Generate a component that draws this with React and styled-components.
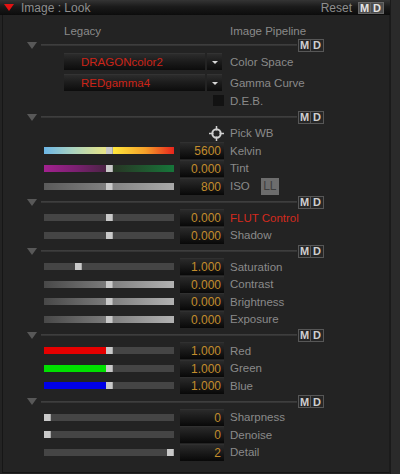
import React from 'react';
import styled, { createGlobalStyle } from 'styled-components';

const GlobalStyle = createGlobalStyle`
  html, body {
    margin: 0;
    padding: 0;
    background: #232323;
  }
  body {
    font-family: "Liberation Sans", Arial, sans-serif;
    font-size: 11.5px;
  }
`;

const Frame = styled.div`
  width: 400px;
  height: 474px;
  display: flex;
  background: #232323;
  overflow: hidden;
`;

const Main = styled.div`
  width: 390px;
  display: flex;
  flex-direction: column;
`;

const ScrollTrack = styled.div`
  width: 9px;
  background: #2a2a2a;
  border-left: 1px solid #1a1a1a;
`;

const TitleBar = styled.div`
  height: 15px;
  display: flex;
  align-items: center;
  padding: 0 6px 0 4px;
  box-sizing: border-box;
  background: linear-gradient(#343434, #1a1a1a 45%, #0c0c0c);
  color: #8e8e8e;
  font-size: 12px;
`;

const Caret = styled.span`
  width: 0;
  height: 0;
  border-left: 5px solid transparent;
  border-right: 5px solid transparent;
  border-top: 7px solid ${p => p.$color || '#e21212'};
`;

const TitleText = styled.span`
  margin-left: 7px;
  flex: 1;
`;

const ResetText = styled.span`
  margin-right: 6px;
`;

const MDGroup = styled.div`
  display: flex;
`;

const MDButton = styled.div`
  width: 13px;
  height: ${p => (p.$title ? '12px' : '13px')};
  box-sizing: border-box;
  display: flex;
  align-items: center;
  justify-content: center;
  font-weight: bold;
  font-size: 11px;
  border: 1px solid ${p => (p.$title ? '#666' : '#575757')};
  background: ${p => (p.$title ? '#4c4c4c' : '#262626')};
  color: ${p => (p.$title ? '#e4e4e4' : '#cfcfcf')};
  & + & {
    border-left: none;
  }
`;

const Body = styled.div`
  height: 458px;
  box-sizing: border-box;
  margin-left: 2px;
  border-left: 1px solid #161616;
  border-right: 1px solid #1b1b1b;
  border-bottom: 1px solid #141414;
  display: flex;
  flex-direction: column;
  color: #8a8a8a;
`;

const Header = styled.div`
  height: 23px;
  box-sizing: border-box;
  padding: 9px 0 0 61px;
  display: grid;
  grid-template-columns: 166px auto;
  line-height: 14px;
`;

const Separator = styled.div`
  height: 14px;
  display: flex;
  align-items: center;
  padding-left: 24px;
`;

const SepLine = styled.div`
  width: 256px;
  height: 2px;
  margin-left: 4px;
  margin-right: 1px;
  background: linear-gradient(#424242, #313131);
`;

const Legacy = styled.div`
  display: flex;
  flex-direction: column;
  padding-top: 1px;
  gap: 4px;
`;

const DropRow = styled.div`
  height: 17px;
  display: flex;
  align-items: center;
  padding-left: 61px;
`;

const DropMain = styled.div`
  width: 141px;
  height: 17px;
  box-sizing: border-box;
  display: flex;
  align-items: center;
  padding-left: 17px;
  color: #cc2418;
  background: linear-gradient(#2c2c2c, #1b1b1b 50%, #0c0c0c);
  border-top: 1px solid #333;
`;

const DropArrow = styled.div`
  width: 15px;
  height: 17px;
  box-sizing: border-box;
  margin-left: 2px;
  margin-right: 8px;
  display: flex;
  align-items: center;
  justify-content: center;
  background: linear-gradient(#2c2c2c, #1b1b1b 50%, #0c0c0c);
  border-top: 1px solid #333;
  &::after {
    content: "";
    border-left: 3px solid transparent;
    border-right: 3px solid transparent;
    border-top: 3px solid #d8d8d8;
  }
`;

const Row = styled.div`
  height: ${p => p.$h || 17.5}px;
  display: grid;
  grid-template-columns: 130px 44px auto;
  column-gap: 6px;
  align-items: center;
  padding-left: 41px;
`;

const Track = styled.div`
  position: relative;
  height: 7px;
  background: ${p => p.$bg || '#454545'};
`;

const Fill = styled.div`
  height: 100%;
  background: ${p => p.$color};
`;

const Thumb = styled.div`
  position: absolute;
  top: 0;
  width: 7px;
  height: 7px;
  background: #c9c9c9;
  box-shadow: inset -1px 0 0 #a8a8a8;
`;

const ValueBox = styled.div`
  height: 17px;
  box-sizing: border-box;
  display: flex;
  align-items: center;
  justify-content: flex-end;
  padding-right: 3px;
  font-size: 12px;
  color: #c38d2c;
  background: linear-gradient(#2a2a2a, #191919 50%, #080808);
  border-top: 1px solid #303030;
`;

const Label = styled.div`
  display: flex;
  align-items: center;
  gap: 11px;
  color: ${p => (p.$red ? '#d42a1e' : '#8a8a8a')};
`;

const Slot = styled.div`
  grid-column: ${p => p.$col};
  display: flex;
  justify-content: flex-end;
  align-items: center;
`;

const CheckBox = styled.div`
  width: 11px;
  height: 11px;
  background: #121212;
`;

const LLButton = styled.div`
  width: 18px;
  height: 17px;
  display: flex;
  align-items: center;
  justify-content: center;
  background: #6d6d6d;
  color: #3e3e3e;
  font-size: 12px;
`;

const Section = styled.div`
  display: flex;
  flex-direction: column;
`;

const MD = ({ title }) => (
  <MDGroup>
    <MDButton $title={title}>M</MDButton>
    <MDButton $title={title}>D</MDButton>
  </MDGroup>
);

const Sep = () => (
  <Separator>
    <Caret $color="#585858" />
    <SepLine />
    <MD />
  </Separator>
);

const Slider = ({ pct, bg, fill, value, label, red, h, extra }) => (
  <Row $h={h}>
    <Track $bg={bg}>
      {fill && <Fill $color={fill} style={{ width: `calc(${pct} * (100% - 7px))` }} />}
      <Thumb style={{ left: `calc(${pct} * (100% - 7px))` }} />
    </Track>
    <ValueBox>{value}</ValueBox>
    <Label $red={red}>
      {label}
      {extra}
    </Label>
  </Row>
);

const PickIcon = () => (
  <svg width="15" height="15" viewBox="0 0 15 15">
    <circle cx="7.5" cy="7.5" r="4.2" fill="none" stroke="#d0d0d0" strokeWidth="2" />
    <path d="M7.5 0v4.5M7.5 10.5v4.5M0 7.5h4.5M10.5 7.5h4.5" stroke="#d0d0d0" strokeWidth="1.5" />
  </svg>
);

const kelvin = 'linear-gradient(to right, #6cb6e6 0%, #a9d2c0 22%, #e6e488 47%, #ffe83c 53%, #f6a02a 78%, #e8241c 100%)';
const tint = 'linear-gradient(to right, #a3218f 0%, #7a2070 25%, #4a2444 48%, #283424 52%, #1f5a30 80%, #16763a 100%)';
const greyRamp = 'linear-gradient(to right, #5a5a5a, #a9a9a9)';
const toneRamp = 'linear-gradient(to right, #484848, #b2b2b2)';

export default function App() {
  return (
    <>
      <GlobalStyle />
      <Frame>
        <Main>
          <TitleBar>
            <Caret />
            <TitleText>Image : Look</TitleText>
            <ResetText>Reset</ResetText>
            <MD title />
          </TitleBar>
          <Body>
            <Header>
              <span>Legacy</span>
              <span>Image Pipeline</span>
            </Header>
            <Sep />
            <Legacy>
              <DropRow>
                <DropMain>DRAGONcolor2</DropMain>
                <DropArrow />
                <Label>Color Space</Label>
              </DropRow>
              <DropRow>
                <DropMain>REDgamma4</DropMain>
                <DropArrow />
                <Label>Gamma Curve</Label>
              </DropRow>
            </Legacy>
            <Row $h={19}>
              <Slot $col={2}>
                <CheckBox />
              </Slot>
              <Label>D.E.B.</Label>
            </Row>
            <Sep />
            <Section>
              <Row $h={18}>
                <Slot $col={2}>
                  <PickIcon />
                </Slot>
                <Label>Pick WB</Label>
              </Row>
              <Slider pct={0.5} bg={kelvin} value="5600" label="Kelvin" />
              <Slider pct={0.5} bg={tint} value="0.000" label="Tint" />
              <Slider pct={0.5} bg={greyRamp} value="800" label="ISO" h={18} extra={<LLButton>LL</LLButton>} />
            </Section>
            <Sep />
            <Section>
              <Slider pct={0.5} value="0.000" label="FLUT Control" red />
              <Slider pct={0.5} value="0.000" label="Shadow" />
            </Section>
            <Sep />
            <Section>
              <Slider pct={0.25} value="1.000" label="Saturation" />
              <Slider pct={0.5} bg={toneRamp} value="0.000" label="Contrast" />
              <Slider pct={0.5} bg={toneRamp} value="0.000" label="Brightness" />
              <Slider pct={0.5} bg={toneRamp} value="0.000" label="Exposure" />
            </Section>
            <Sep />
            <Section>
              <Slider pct={0.5} fill="#e60000" value="1.000" label="Red" />
              <Slider pct={0.5} fill="#00e000" value="1.000" label="Green" />
              <Slider pct={0.5} fill="#0000e6" value="1.000" label="Blue" />
            </Section>
            <Sep />
            <Section>
              <Slider pct={0} value="0" label="Sharpness" />
              <Slider pct={0} value="0" label="Denoise" />
              <Slider pct={1} value="2" label="Detail" />
            </Section>
          </Body>
        </Main>
        <ScrollTrack />
      </Frame>
    </>
  );
}
